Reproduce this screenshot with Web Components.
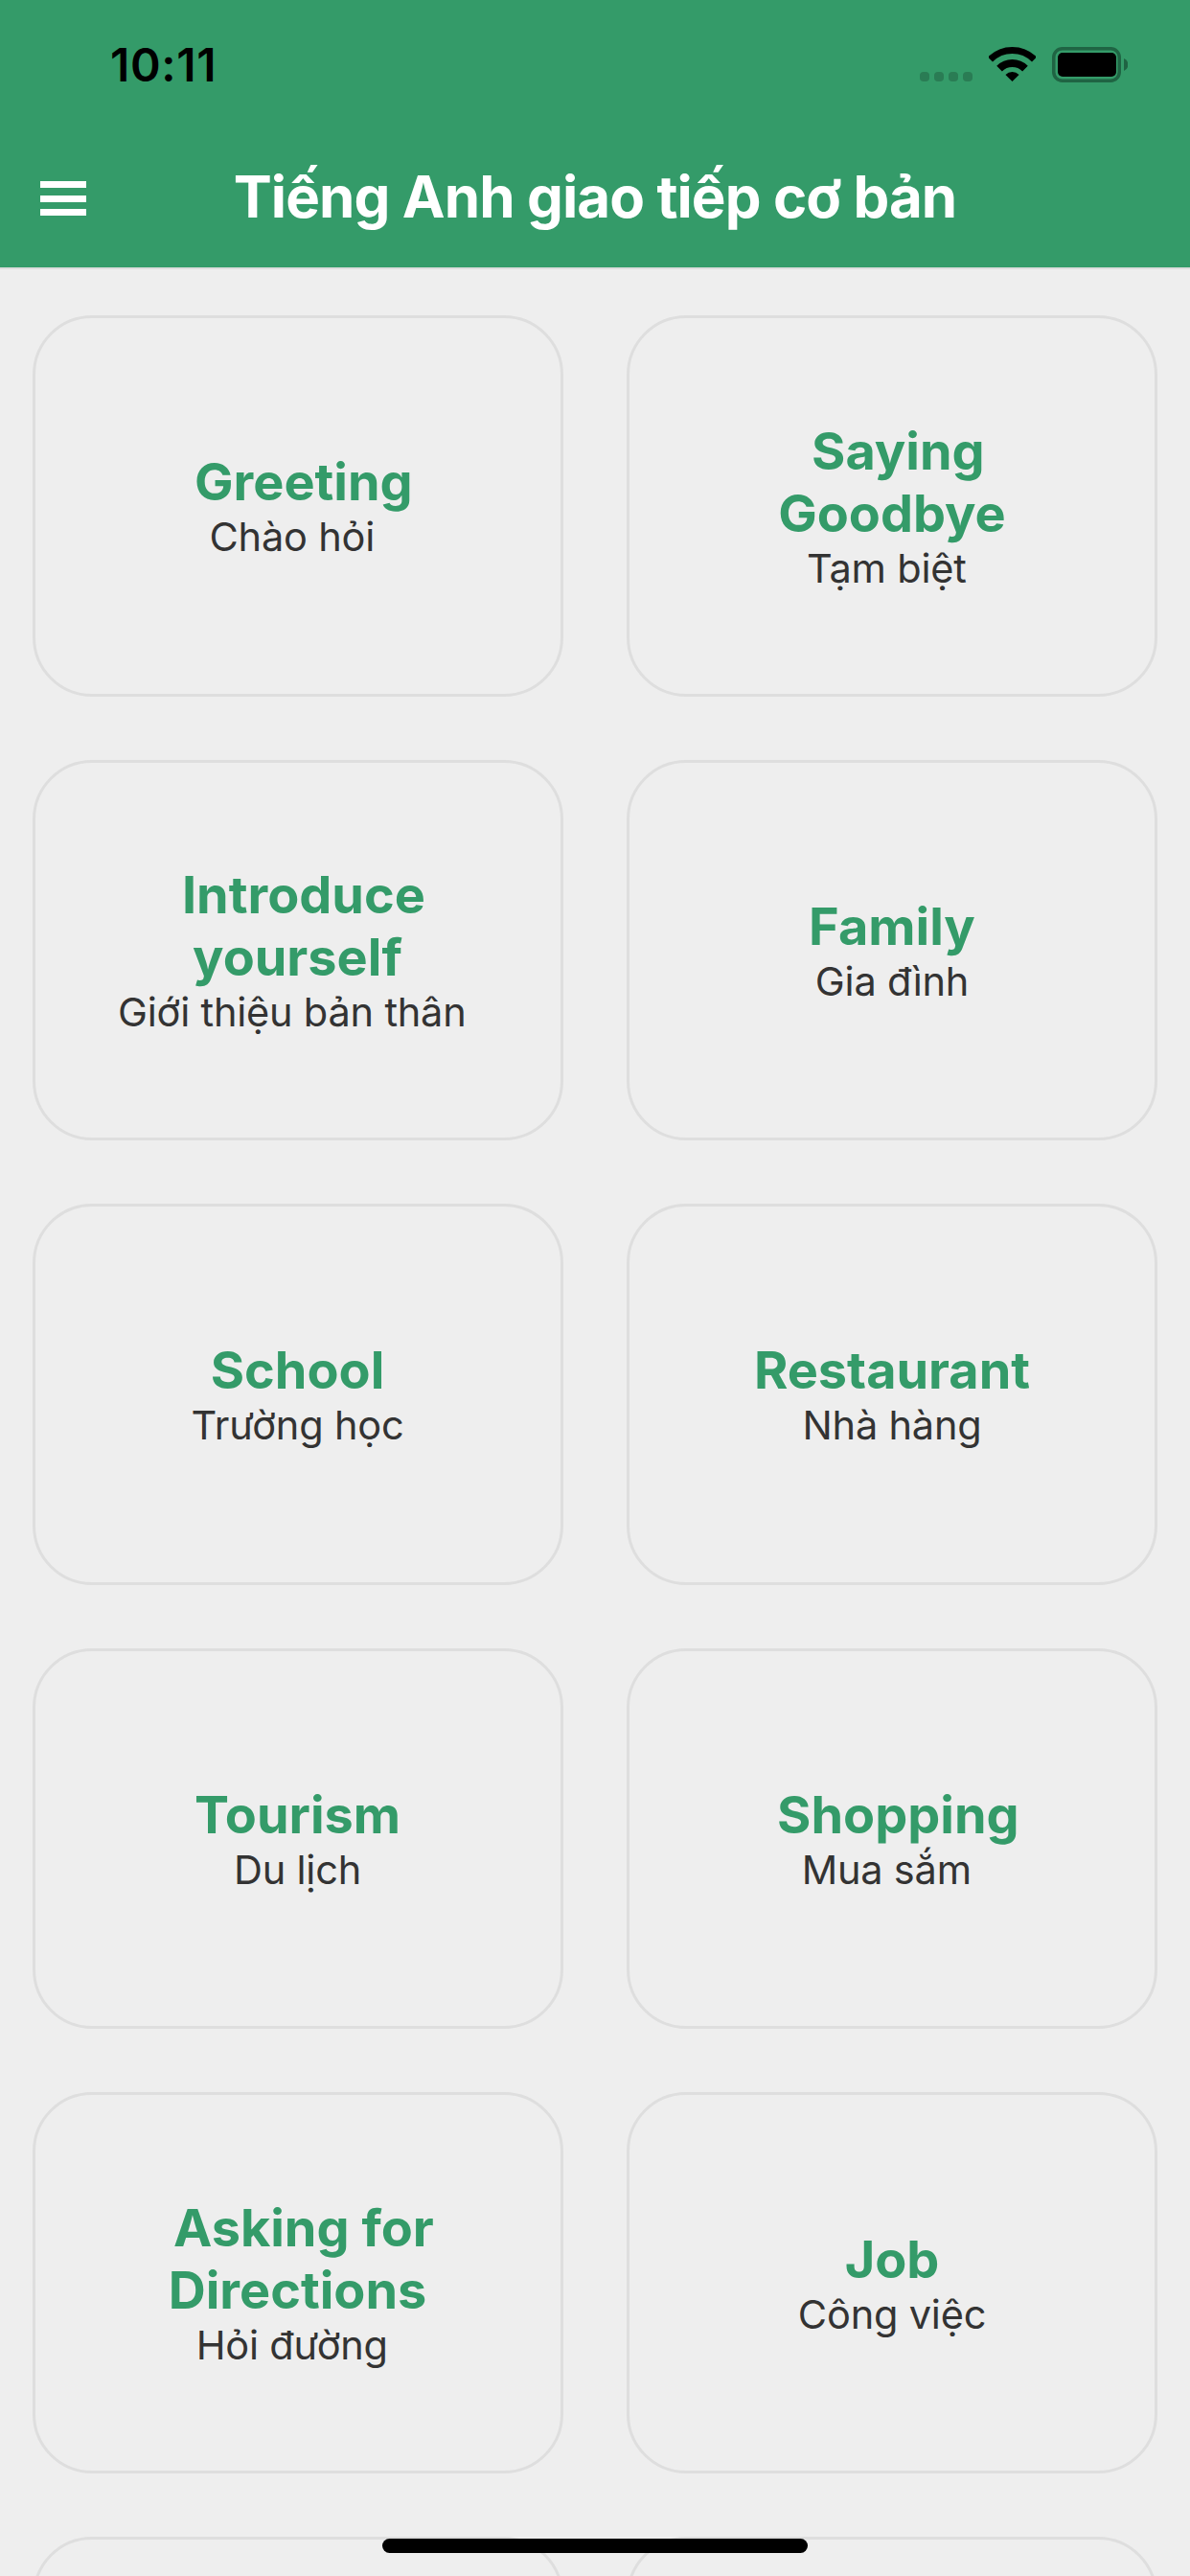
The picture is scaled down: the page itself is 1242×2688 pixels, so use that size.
<!DOCTYPE html>
<html lang="vi">
<head>
<meta charset="utf-8">
<title>Tiếng Anh giao tiếp cơ bản</title>
<style>
  html, body { margin: 0; padding: 0; background: #eeeeee; }
  body { width: 1242px; height: 2688px; overflow: hidden; position: relative; font-family: Inter, "Noto Sans", sans-serif; }
</style>
</head>
<body>
<template id="status-tpl">
  <style>
    :host { display: flex; align-items: flex-start; justify-content: space-between; height: 99px; padding: 0 65px 0 115px; box-sizing: border-box; color: #000; }
    .time { font: 600 48px/60px Inter, sans-serif; margin-top: 38px; letter-spacing: 0.7px; }
    .right { display: flex; align-items: flex-end; margin-top: 49px; height: 37px; }
    .dots { display: flex; gap: 5px; margin: 0 17px 1px 0; }
    .dots i { width: 10px; height: 10px; border-radius: 4px; background: #2a7c54; }
    svg { display: block; }
    .wifi { margin-right: 17px; margin-bottom: 1px; }
    .batt { display: block; }
  </style>
  <span class="time">10:11</span>
  <div class="right">
    <div class="dots"><i></i><i></i><i></i><i></i></div>
    <svg class="wifi" width="49" height="36" viewBox="0 0 49 36">
      <path d="M1.52 13.02A32.5 32.5 0 0 1 47.48 13.02" fill="none" stroke="#000" stroke-width="7"/>
      <path d="M11.06 22.56A19 19 0 0 1 37.94 22.56" fill="none" stroke="#000" stroke-width="8"/>
      <path d="M24.5 36L17.43 28.93A10 10 0 0 1 31.57 28.93Z" fill="#000"/>
    </svg>
    <svg class="batt" width="79" height="37" viewBox="0 0 79 37">
      <rect x="1.75" y="1.75" width="68.5" height="33.5" rx="9" fill="none" stroke="#1f6443" stroke-width="3.5"/>
      <rect x="6" y="6" width="61" height="25" rx="5" fill="#000"/>
      <path d="M75 12A7 7 0 0 1 75 25Z" fill="#1f6443"/>
    </svg>
  </div>
</template>

<template id="appbar-tpl">
  <style>
    :host { display: flex; align-items: center; justify-content: center; height: 180px; position: relative; color: #fff; }
    .menu { position: absolute; left: 42px; top: 90px; width: 48px; display: flex; flex-direction: column; gap: 7.5px; }
    .menu i { display: block; height: 7px; background: #fff; }
    h1 { margin: 0; font: 700 60px/70px Inter, sans-serif; letter-spacing: -0.9px; white-space: nowrap; }
    .wrap { height: 180px; display: flex; align-items: flex-start; padding-top: 71px; box-sizing: border-box; }
  </style>
  <div class="menu"><i></i><i></i><i></i></div>
  <div class="wrap"><h1><slot></slot></h1></div>
</template>

<template id="card-tpl">
  <style>
    :host { display: flex; flex-direction: column; align-items: center; justify-content: center; box-sizing: border-box; height: 397.6px; padding: 0 70px; border: 3px solid #dedede; border-radius: 62px; text-align: center; }
    .t { font: 700 54px/65px Inter, sans-serif; color: #349b69; letter-spacing: 0; }
    .s { font: 400 41.5px/50px Inter, sans-serif; color: #333; letter-spacing: -0.2px; }
  </style>
  <div class="t"><slot name="title"></slot></div>
  <div class="s"><slot name="sub"></slot></div>
</template>

<template id="grid-tpl">
  <style>
    :host { display: grid; grid-template-columns: 554px 554px; column-gap: 66.5px; row-gap: 66px; padding: 48px 0 0 33.5px; }
  </style>
  <slot></slot>
</template>

<template id="header-tpl">
  <style>
    :host { display: block; background: #349b69; border-bottom: 2px solid #dddddd; }
  </style>
  <slot></slot>
</template>

<template id="home-tpl">
  <style>
    :host { display: block; position: absolute; left: 399px; top: 2649px; width: 444px; height: 15px; border-radius: 7.5px; background: #000; }
  </style>
</template>

<app-header>
  <status-bar></status-bar>
  <app-bar>Tiếng Anh giao tiếp cơ bản</app-bar>
</app-header>

<topic-grid>
  <topic-card><span slot="title">&nbsp;Greeting</span><span slot="sub">Chào hỏi&nbsp;</span></topic-card>
  <topic-card><span slot="title">&nbsp;Saying Goodbye</span><span slot="sub">Tạm biệt&nbsp;</span></topic-card>
  <topic-card><span slot="title">&nbsp;Introduce yourself</span><span slot="sub">Giới thiệu bản thân&nbsp;</span></topic-card>
  <topic-card><span slot="title">Family</span><span slot="sub">Gia đình</span></topic-card>
  <topic-card><span slot="title">School</span><span slot="sub">Trường học</span></topic-card>
  <topic-card><span slot="title">Restaurant</span><span slot="sub">Nhà hàng</span></topic-card>
  <topic-card><span slot="title">Tourism</span><span slot="sub">Du lịch</span></topic-card>
  <topic-card><span slot="title">&nbsp;Shopping</span><span slot="sub">Mua sắm&nbsp;</span></topic-card>
  <topic-card><span slot="title">&nbsp;Asking for Directions</span><span slot="sub">Hỏi đường&nbsp;</span></topic-card>
  <topic-card><span slot="title">Job</span><span slot="sub">Công việc</span></topic-card>
  <topic-card></topic-card>
  <topic-card></topic-card>
</topic-grid>

<home-indicator></home-indicator>

<script>
  const reg = (name, tplId) => customElements.define(name, class extends HTMLElement {
    constructor() {
      super();
      this.attachShadow({ mode: 'open' }).appendChild(document.getElementById(tplId).content.cloneNode(true));
    }
  });
  reg('app-header', 'header-tpl');
  reg('status-bar', 'status-tpl');
  reg('app-bar', 'appbar-tpl');
  reg('topic-grid', 'grid-tpl');
  reg('topic-card', 'card-tpl');
  reg('home-indicator', 'home-tpl');
</script>
</body>
</html>
